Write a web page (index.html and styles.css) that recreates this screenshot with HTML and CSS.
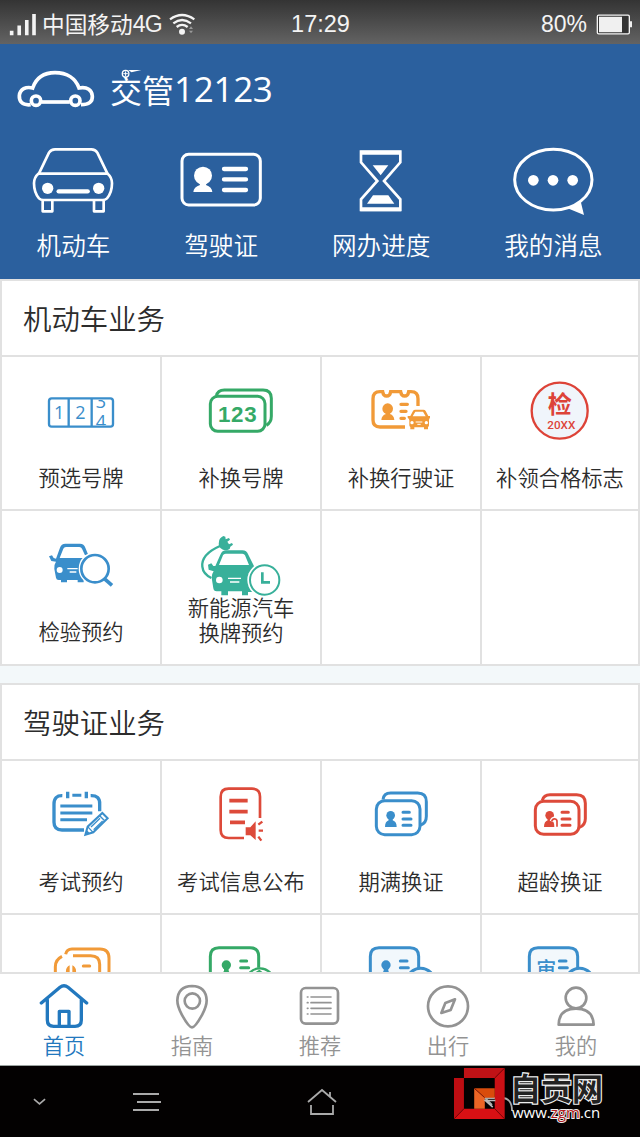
FILE: index.html
```html
<!DOCTYPE html>
<html lang="zh-CN">
<head>
    <meta charset="UTF-8">
    <meta name="viewport" content="width=device-width, initial-scale=1.0">
    <title>交管12123</title>
    <link rel="stylesheet" href="styles.css">
</head>
<body>
    <div class="status-bar">
        <div class="status-left">
            <svg class="signal" viewBox="28 30 84 70">
                <path d="M30 84h11v14H30zM53 68h11v30H53zM76 51h11v47H76zM98 33h11v65H98z" fill="#f4f4f4"/>
            </svg>
            <span class="carrier">中国移动</span><span class="network">4G</span>
            <svg class="wifi" viewBox="508 32 78 66">
                <g fill="none" stroke="#f4f4f4" stroke-width="7">
                    <path d="M511 51q36-26 73 0M521 63q26-20 53 0M531 74q16-13 33 0"/>
                </g>
                <circle cx="547" cy="88" r="9" fill="#f4f4f4"/>
                <path d="M568 80l6-8 6 8zM568 85l6 8 6-8z" fill="#999"/>
            </svg>
        </div>
        <span class="clock">17:29</span>
        <div class="status-right">
            <span>80%</span>
            <svg class="battery" viewBox="826 36 108 62">
                <rect x="830" y="39" width="96" height="56" rx="4" fill="#333" stroke="#f4f4f4" stroke-width="4"/>
                <path d="M835 44h69v46h-69zM928 57h6v18h-6z" fill="#f0f0f0"/>
            </svg>
        </div>
    </div>

    <header class="header">
        <div class="brand">
            <svg class="logo" viewBox="48 200 240 120">
                <g fill="none" stroke="#fff" stroke-width="11">
                    <path d="M92 307C66 310 57 296 58 280C60 260 78 252 98 257C108 228 132 211 165 211C201 211 227 228 237 257C262 252 276 264 277 281C278 297 268 307 243 307"/>
                    <path d="M124 299h85"/>
                    <circle cx="108" cy="295" r="14"/>
                    <circle cx="226" cy="295" r="14"/>
                </g>
            </svg>
            <h1>交管<span>12123</span></h1>
            <svg class="badge" viewBox="360 208 70 30">
                <path d="M385 211h40l-30 7z" fill="#fff"/>
                <circle cx="377" cy="222" r="10" fill="#2b609e" stroke="#fff" stroke-width="4"/>
                <path d="M370 222h14M377 215v14" stroke="#fff" stroke-width="3"/>
            </svg>
        </div>
        <nav class="quick">
            <a class="quick-item">
                <svg viewBox="77 36 288 240">
                    <g fill="none" stroke="#fff" stroke-width="8" stroke-linejoin="round">
                        <path d="M119 130L149 68Q155 58 167 58H276Q288 58 294 68L324 130"/>
                        <path d="M117 131H325Q338 142 338 160Q338 188 323 205Q318 210 310 210H132Q124 210 119 205Q104 188 104 160Q104 142 117 131Z"/>
                        <path d="M130 212v32h29v-32M284 212v32h29v-32"/>
                    </g>
                    <circle cx="145" cy="175" r="17" fill="#fff"/>
                    <circle cx="298" cy="175" r="17" fill="#fff"/>
                    <path d="M178 184h87" stroke="#fff" stroke-width="13" stroke-linecap="round"/>
                </svg>
                <span>机动车</span>
            </a>
            <a class="quick-item">
                <svg viewBox="520 36 288 240">
                    <rect x="547" y="73" width="235" height="152" rx="20" fill="none" stroke="#fff" stroke-width="9"/>
                    <circle cx="610" cy="137" r="27" fill="#fff"/>
                    <path d="M597 150h26l-4 15q18 6 19 21h-57q1-15 20-21z" fill="#fff"/>
                    <path d="M673 117h66M673 148h66M673 180h66" stroke="#fff" stroke-width="13" stroke-linecap="round"/>
                </svg>
                <span>驾驶证</span>
            </a>
            <a class="quick-item">
                <svg viewBox="40 36 288 240">
                    <path d="M124 65H242V97L193 153L242 208V240H124V208L173 153L124 97Z" fill="none" stroke="#fff" stroke-width="8"/>
                    <path d="M122 68h122M122 238h122" stroke="#fff" stroke-width="12"/>
                    <path d="M159 106h47l-23 30zM160 196h46l18 25h-82z" fill="#fff"/>
                </svg>
                <span>网办进度</span>
            </a>
            <a class="quick-item">
                <svg viewBox="557 36 288 240">
                    <ellipse cx="702" cy="149" rx="116" ry="91" fill="none" stroke="#fff" stroke-width="9"/>
                    <path d="M743 234Q768 227 784 214L794 255Z" fill="#fff"/>
                    <g fill="#fff">
                        <circle cx="642" cy="151" r="16"/>
                        <circle cx="701" cy="151" r="16"/>
                        <circle cx="760" cy="151" r="16"/>
                    </g>
                </svg>
                <span>我的消息</span>
            </a>
        </nav>
    </header>

    <main class="content">
        <section class="panel">
            <h2>机动车业务</h2>
            <a class="cell">
                <svg viewBox="99 60 288 240">
                    <g fill="none" stroke="#3a8ecb" stroke-width="7">
                        <rect x="147" y="145" width="192" height="85" rx="8"/>
                        <path d="M206 145v85M275 145v85"/>
                    </g>
                    <svg x="148" y="150" width="190" height="76" viewBox="148 150 190 76">
                        <g class="plate-digits">
                            <text x="162" y="206">1</text>
                            <text x="226" y="206">2</text>
                            <text x="287" y="174">3</text>
                            <text x="287" y="233">4</text>
                        </g>
                    </svg>
                </svg>
                <span>预选号牌</span>
            </a>
            <a class="cell">
                <svg viewBox="579 60 288 240">
                    <g fill="none" stroke="#35a967" stroke-width="9">
                        <path d="M649 138Q653 120 673 120H789Q814 120 814 145V199Q814 218 799 226"/>
                        <rect x="631" y="139" width="164" height="105" rx="22"/>
                    </g>
                    <text class="plate-number" x="713" y="217">123</text>
                </svg>
                <span>补换号牌</span>
            </a>
            <a class="cell">
                <svg viewBox="99 60 288 240">
                    <g fill="none" stroke="#f19a38" stroke-width="10">
                        <path d="M294 168V146Q294 125 273 125H266Q264 138 254 138Q244 138 242 125H212Q210 138 200 138Q190 138 188 125H180Q159 125 159 146V210Q159 231 180 231H255"/>
                        <path d="M243 163h19M243 184h15M243 205h10" stroke-linecap="round"/>
                    </g>
                    <g fill="#f19a38">
                        <circle cx="203" cy="176" r="16"/>
                        <path d="M194 184h18l-2 8q12 4 13 18h-39q1-14 14-18z"/>
                        <path fill-rule="evenodd" d="M263 198h8l8-15q2-4 7-4h24q5 0 7 4l8 15h5v5q-3 3-3 8v15q0 3-3 5v7h-12v-6h-29v6h-12v-7q-3-2-3-5v-15q0-5-5-8zM278 199h39l-8-14h-23z"/>
                    </g>
                    <path d="M287 216h20M292 223h10" stroke="#fff" stroke-width="3"/>
                    <circle cx="276" cy="218" r="5" fill="#fff"/>
                    <circle cx="319" cy="218" r="5" fill="#fff"/>
                </svg>
                <span>补换行驶证</span>
            </a>
            <a class="cell">
                <svg viewBox="576 60 288 240">
                    <circle cx="719" cy="182" r="84" fill="#f0f5fb" stroke="#dd4338" stroke-width="7"/>
                    <text class="stamp-mark" x="719" y="188">检</text>
                    <text class="stamp-year" x="724" y="238">20XX</text>
                </svg>
                <span>补领合格标志</span>
            </a>
            <a class="cell">
                <svg viewBox="99 42 288 240">
                    <path fill="#3a8ecb" fill-rule="evenodd" d="M147 139l9-3 5 8 7 2l12-33q4-12 16-12h44q12 0 16 12l8 20-9 3-9-20q-2-5-8-5h-40q-6 0-8 5l-11 28h78l-18 35 12 31v7h-18v-7h-32v7h-18v-7h-7q-7 0-8-7l-5-26q-2-12 5-22l-14-2z"/>
                    <circle cx="179" cy="180" r="9" fill="#fff"/>
                    <path d="M202 176h31M209 186h20" stroke="#fff" stroke-width="4"/>
                    <circle cx="285" cy="176" r="49" fill="#fff"/>
                    <circle cx="285" cy="176" r="41" fill="#fff" stroke="#3a8ecb" stroke-width="8"/>
                    <path d="M313 206l23 20" stroke="#3a8ecb" stroke-width="11"/>
                </svg>
                <span>检验预约</span>
            </a>
            <a class="cell two-line">
                <svg viewBox="579 42 288 240">
                    <path d="M660 108Q603 133 607 170Q609 192 634 204" fill="none" stroke="#38b09a" stroke-width="7"/>
                    <path d="M657 95q0-10 13-17l6 2 1 8 10-4 3 5-8 6 5 8 9-4 3 5-8 6-2 7q-15 8-27-2-8-8-5-20z" fill="#38b09a"/>
                    <path fill="#38b09a" fill-rule="evenodd" d="M624 164l10-4 6 8 6 0l15-34q5-13 18-13h48q13 0 18 13l18 36-2 76h-17v10h-18v-12h-42v12h-20v-12h-14q-9 0-10-9l-5-32q-1-9 6-19l-15-5zM657 165h90l-12-29q-2-5-8-5h-50q-6 0-8 5z"/>
                    <circle cx="658" cy="210" r="10" fill="#fff"/>
                    <path d="M684 205h39M690 216h28" stroke="#fff" stroke-width="4"/>
                    <circle cx="794" cy="210" r="52" fill="#fff"/>
                    <circle cx="794" cy="210" r="44" fill="#fff" stroke="#38b09a" stroke-width="6"/>
                    <path d="M787 187v30h23" fill="none" stroke="#38b09a" stroke-width="8"/>
                </svg>
                <span>新能源汽车<br>换牌预约</span>
            </a>
            <a class="cell"></a>
            <a class="cell"></a>
        </section>

        <section class="panel">
            <h2>驾驶证业务</h2>
            <a class="cell">
                <svg viewBox="99 312 288 240">
                    <g fill="none" stroke="#3a8ecb">
                        <path d="M187 377Q162 376 162 402V457Q162 480 186 480H252M272 377Q300 376 299 402V424" stroke-width="10"/>
                        <path d="M217 376h27M181 408h96M181 429h96M181 449h80" stroke-width="9"/>
                        <path d="M203 365v20M259 365v20" stroke-width="10"/>
                        <path d="M256 494L263 470L307 429L323 445L280 487Z" stroke-width="6"/>
                        <path d="M263 470l16 17M299 437l15 15M273 471l27-26M281 479l27-26" stroke-width="4"/>
                    </g>
                    <path d="M256 494l4-14 10 10z" fill="#3a8ecb"/>
                </svg>
                <span>考试预约</span>
            </a>
            <a class="cell">
                <svg viewBox="579 312 288 240">
                    <g fill="none" stroke="#dd4a3a">
                        <path d="M780 444V380Q780 356 756 356H686Q662 356 662 380V480Q662 504 686 504H732" stroke-width="8"/>
                        <path d="M688 392h55M688 425h55M690 457h45" stroke-width="11"/>
                        <path d="M775 464l12-9M776 482h13M775 500l9 12" stroke-width="7"/>
                    </g>
                    <path d="M737 472h14l16-18v56l-16-14h-14z" fill="#dd4a3a"/>
                </svg>
                <span>考试信息公布</span>
            </a>
            <a class="cell">
                <svg viewBox="99 72 288 240">
                    <g fill="none" stroke="#3a8ecb" stroke-width="9">
                        <path d="M189 149Q191 129 212 129H293Q319 129 319 155V199Q319 220 302 225"/>
                        <rect x="169" y="152" width="131" height="102" rx="25"/>
                        <path d="M249 187h19M249 207h24M249 226h24" stroke-linecap="round"/>
                    </g>
                    <circle cx="212" cy="196" r="13" fill="#3a8ecb"/>
                    <path d="M205 203h14l-1 8q12 4 12 20h-35q0-16 11-20z" fill="#3a8ecb"/>
                </svg>
                <span>期满换证</span>
            </a>
            <a class="cell">
                <svg viewBox="576 72 288 240">
                    <g fill="none" stroke="#dd4a3a" stroke-width="9">
                        <path d="M667 151Q671 134 690 134H770Q796 134 796 160V206Q796 226 777 233"/>
                        <rect x="646" y="154" width="131" height="99" rx="25"/>
                        <path d="M726 187h19M726 207h24M726 226h24" stroke-linecap="round"/>
                    </g>
                    <circle cx="689" cy="196" r="13" fill="#dd4a3a"/>
                    <path d="M682 203h14l-1 8q8 4 8 20h-31q0-16 11-20z" fill="#dd4a3a"/>
                    <path d="M694 214q3-10 12-8 7 2 6 9v16" fill="none" stroke="#fff" stroke-width="10"/>
                    <path d="M695 214q3-9 11-7 6 2 5 9v14" fill="none" stroke="#dd4a3a" stroke-width="5"/>
                </svg>
                <span>超龄换证</span>
            </a>
            <a class="cell">
                <svg viewBox="99 69 288 240">
                    <g fill="none" stroke="#f19a38" stroke-width="9">
                        <path d="M197 148Q200 132 216 132H300Q327 132 327 160V240"/>
                        <path d="M219 152H272Q299 152 299 178V240M186 154Q166 164 166 185V240"/>
                        <path d="M250 183h19" stroke-linecap="round"/>
                    </g>
                    <path d="M209 181v26h-10q-5-18 10-26zM217 181v26h10q5-18-10-26z" fill="#f19a38"/>
                </svg>
            </a>
            <a class="cell">
                <svg viewBox="579 69 288 240">
                    <g fill="none" stroke="#35a967" stroke-width="9">
                        <path d="M631 240V154Q631 128 657 128H750Q776 128 776 154V188"/>
                        <path d="M722 168h18M722 188h24" stroke-linecap="round"/>
                        <circle cx="780" cy="232" r="42" stroke-width="7"/>
                        <path d="M767 204l11-7 9 7" stroke-width="5"/>
                    </g>
                    <circle cx="679" cy="180" r="14" fill="#35a967"/>
                    <path d="M672 188h14v10l8 12h-32l10-12z" fill="#35a967"/>
                </svg>
            </a>
            <a class="cell">
                <svg viewBox="99 69 288 240">
                    <g fill="#f2f8fc" stroke="#3a8ecb" stroke-width="9">
                        <path d="M151 240V154Q151 128 177 128H270Q296 128 296 154V188"/>
                        <path d="M241 168h20M241 188h24" stroke-linecap="round"/>
                        <circle cx="302" cy="232" r="42"/>
                    </g>
                    <circle cx="198" cy="180" r="14" fill="#3a8ecb"/>
                    <path d="M191 188h14v10l8 12h-32l10-12z" fill="#3a8ecb"/>
                </svg>
            </a>
            <a class="cell">
                <svg viewBox="576 69 288 240">
                    <g fill="#f2f8fc" stroke="#3a8ecb" stroke-width="9">
                        <path d="M628 240V154Q628 128 654 128H747Q773 128 773 154V188"/>
                        <path d="M718 168h20M718 188h24" stroke-linecap="round"/>
                        <circle cx="779" cy="232" r="42"/>
                    </g>
                    <text class="review-mark" x="679" y="215">审</text>
                </svg>
            </a>
        </section>
    </main>

    <nav class="tab-bar">
        <a class="tab active">
            <svg viewBox="96 231 192 150">
                <path d="M124 294L180 247Q192 237 204 247L260 294M142 284V345Q142 364 161 364H225Q244 364 244 345V284M178 362V319H207V362"/>
            </svg>
            <span>首页</span>
        </a>
        <a class="tab">
            <svg viewBox="480 231 192 150">
                <path d="M576 367Q566 367 545 328Q532 304 532 286Q534 244 576 243Q618 244 620 286Q620 304 607 328Q586 367 576 367Z"/>
                <circle cx="577" cy="288" r="23"/>
            </svg>
            <span>指南</span>
        </a>
        <a class="tab">
            <svg viewBox="864 231 192 150">
                <rect x="903" y="249" width="111" height="107" rx="14"/>
                <path class="thin" d="M933 276h60M933 293h60M933 310h60M933 327h60M922 276h2M922 293h2M922 310h2M922 327h2"/>
            </svg>
            <span>推荐</span>
        </a>
        <a class="tab">
            <svg viewBox="288 231 192 150">
                <circle cx="384" cy="304" r="60"/>
                <path d="M405 283L376 294L364 324L392 315Z"/>
            </svg>
            <span>出行</span>
        </a>
        <a class="tab">
            <svg viewBox="672 231 192 150">
                <circle cx="768" cy="279" r="31"/>
                <path d="M716 359Q717 311 768 311Q819 311 821 359Z"/>
            </svg>
            <span>我的</span>
        </a>
    </nav>

    <footer class="system-nav">
        <svg class="nav-down" viewBox="0 0 14 8"><path d="M1 1l6 5 6-5"/></svg>
        <svg class="nav-menu" viewBox="0 0 30 20"><path d="M1 2h26M5 10h24M1 18h26"/></svg>
        <svg class="nav-home" viewBox="0 0 32 28"><path d="M2 14L16 2L30 14M24 9V4M5 17V26H27V17"/></svg>
        <svg class="nav-back" viewBox="0 0 32 22"><path d="M8 2L1 7L8 14M1 7H18Q28 7 28 20"/></svg>
        <div class="watermark">
            <svg viewBox="402 24 154 154">
                <path d="M432 24h123l-30 30h-93z" fill="#c01216"/>
                <path d="M555 24v154l-30-31V54z" fill="#cb1015"/>
                <path d="M402 54h30v93l-30 31z" fill="#bd0d12"/>
                <path d="M402 178l30-31h93l30 31z" fill="#d81014"/>
                <path d="M463 85h62v29h-30z" fill="#d94c0c"/>
                <path d="M463 85l32 29v33h-32z" fill="#ec6525"/>
                <path d="M555 24l-30 30M402 178l30-31M555 178l-30-31M463 85l32 29" stroke="#600" stroke-width="2"/>
                <path d="M527 122h-30l22 20" stroke="#bbb" stroke-width="5" fill="none"/>
            </svg>
            <div class="watermark-text">
                <strong>自贡网</strong>
                <span>www.<em>zgm</em>.cn</span>
            </div>
        </div>
    </footer>
</body>
</html>
```

FILE: styles.css
```css
* {
    box-sizing: border-box;
}
body {
    margin: 0;
    width: 640px;
    height: 1137px;
    overflow: hidden;
    display: flex;
    flex-direction: column;
    font-family: Roboto, "Noto Sans CJK SC", sans-serif;
    background: #f3f8fa;
    color: #2c2c2c;
}
svg {
    display: block;
    flex: none;
}

/* status bar */
.status-bar {
    display: grid;
    grid-template-columns: 1fr auto 1fr;
    align-items: center;
    height: 44px;
    padding: 2px 8px 0 9px;
    background: linear-gradient(#343434, #636363);
    color: #f4f4f4;
    font: 24px/40px "Liberation Sans", sans-serif;
}
.clock {
    font-size: 23.5px;
    line-height: 44px;
}
.status-left,
.status-right {
    display: flex;
    align-items: center;
}
.status-right {
    justify-content: flex-end;
    gap: 9px;
    font-size: 23px;
}
.signal {
    width: 28px;
    height: 23px;
    margin-right: 5px;
}
.carrier {
    font-family: "Noto Sans CJK SC", sans-serif;
    font-size: 22.7px;
}
.network {
    font-size: 23px;
    letter-spacing: -0.8px;
}
.wifi {
    width: 26px;
    height: 22px;
    margin-left: 7px;
}
.battery {
    width: 36px;
    height: 21px;
}

/* header */
.header {
    height: 235px;
    background: #2b609e;
    color: #fff;
}
.brand {
    position: relative;
    display: flex;
    align-items: center;
    height: 90px;
    padding-left: 16px;
}
.logo {
    width: 80px;
    height: 40px;
}
h1 {
    display: flex;
    align-items: center;
    margin: 0 0 0 14px;
    font: 400 32px/44px "Noto Sans CJK SC", sans-serif;
}
h1 span {
    font: 400 35px/44px "Open Sans", sans-serif;
    letter-spacing: -0.3px;
}
.badge {
    position: absolute;
    left: 120px;
    top: 25px;
    width: 23px;
    height: 10px;
}
.quick {
    display: flex;
    justify-content: space-around;
    padding-top: 8px;
}
.quick-item {
    display: flex;
    flex-direction: column;
    align-items: center;
    padding: 0 37px 0 36.2px;
    font-size: 24.6px;
    font-weight: 350;
    line-height: 30px;
    white-space: nowrap;
}
.quick-item svg {
    width: 96px;
    height: 80px;
    margin: 0 -20px 10px;
}

/* service panels */
.content {
    height: 693px;
    flex: none;
    overflow: hidden;
}
.panel {
    display: grid;
    grid-template-columns: 158px 158px 158px 156px;
    grid-template-rows: 74px 152px 153px;
    gap: 2px;
    padding: 2px;
    margin-bottom: 17px;
    background: #e1e1e1;
}
h2 {
    grid-column: 1 / -1;
    margin: 0;
    padding-left: 21px;
    background: #fff;
    font-size: 28.4px;
    font-weight: 350;
    line-height: 79px;
}
.cell {
    display: flex;
    flex-direction: column;
    align-items: center;
    padding-top: 13px;
    background: #fff;
    font-size: 21.3px;
    font-weight: 350;
    line-height: 28px;
    text-align: center;
    white-space: nowrap;
}
.cell svg {
    width: 96px;
    height: 80px;
    margin-bottom: 15px;
}
.cell svg svg {
    width: 190px;
    height: 76px;
}
.cell.two-line {
    line-height: 25px;
}
.cell.two-line svg {
    margin-bottom: -8px;
}
.plate-digits {
    font: 54px "Open Sans", sans-serif;
    fill: #3a8ecb;
}
.plate-number {
    font: bold 67px "Liberation Sans", sans-serif;
    letter-spacing: 2px;
    fill: #35a967;
    text-anchor: middle;
}
.stamp-mark {
    font: bold 72px "Noto Sans CJK SC", sans-serif;
    fill: #dd4338;
    text-anchor: middle;
}
.stamp-year {
    font: 500 35px Roboto, sans-serif;
    fill: #dd4338;
    text-anchor: middle;
}
.review-mark {
    font: 500 60px "Noto Sans CJK SC", sans-serif;
    fill: #3a8ecb;
    text-anchor: middle;
}

/* tab bar */
.tab-bar {
    display: flex;
    height: 94px;
    border-top: 2px solid #e1e1e1;
    border-bottom: 1px solid #9aa3a0;
    background: #fff;
}
.tab {
    flex: 1;
    display: flex;
    flex-direction: column;
    align-items: center;
    padding-top: 8px;
    font-size: 21.2px;
    font-weight: 350;
    line-height: 29px;
    color: #939393;
}
.tab svg {
    width: 64px;
    height: 50px;
    fill: none;
    stroke: currentColor;
    stroke-width: 8;
    stroke-linecap: round;
    stroke-linejoin: round;
}
.tab .thin {
    stroke-width: 5;
}
.active {
    color: #2278be;
}
.active svg {
    stroke-width: 10;
}

/* system navigation */
.system-nav {
    position: relative;
    flex: 1;
    display: flex;
    align-items: center;
    padding-left: 33px;
    background: #030101;
}
.system-nav > svg {
    fill: none;
    stroke: #aaa;
    stroke-width: 1.8;
}
.nav-down {
    width: 13px;
    height: 8px;
}
.nav-menu {
    width: 30px;
    height: 20px;
    margin-left: 86px;
}
.nav-home {
    width: 32px;
    height: 28px;
    margin-left: 144px;
}
.nav-back {
    width: 32px;
    height: 22px;
    margin-left: 146px;
}
.watermark {
    position: absolute;
    left: 454px;
    top: 2px;
    display: flex;
    gap: 5px;
}
.watermark > svg {
    width: 51px;
    height: 51px;
}
.watermark-text {
    display: flex;
    flex-direction: column;
    color: #fff;
}
.watermark strong {
    font: 700 31px/37px "Noto Sans CJK SC", sans-serif;
    color: #222;
    -webkit-text-stroke: 2.4px #eee;
    paint-order: stroke fill;
}
.watermark span {
    margin: -1px 0 0 2px;
    font: 15px/16px "Open Sans", sans-serif;
}
.watermark em {
    font-style: normal;
    color: #b01c20;
    -webkit-text-stroke: 2px #eee;
    paint-order: stroke fill;
}
```
